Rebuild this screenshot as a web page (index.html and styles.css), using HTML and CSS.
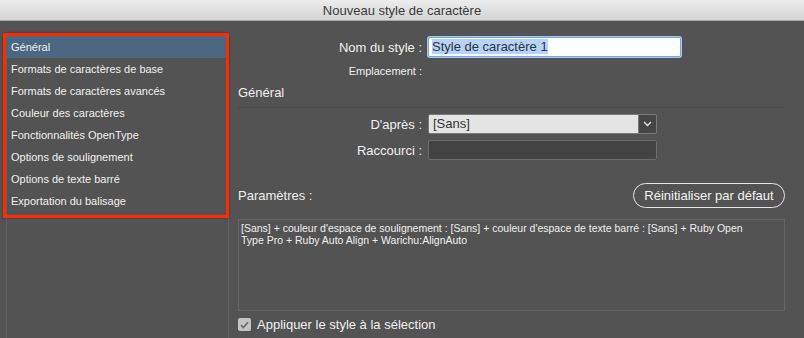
FILE: index.html
```html
<!DOCTYPE html>
<html lang="fr">
<head>
  <meta charset="UTF-8" />
  <title>Nouveau style de caractère</title>
  <link rel="stylesheet" href="styles.css">
</head>
<body>
  <div class="titlebar">Nouveau style de caractère</div>

  <div class="dialog">
    <div class="sidebar">
      <ul class="nav">
        <li class="active">Général</li>
        <li>Formats de caractères de base</li>
        <li>Formats de caractères avancés</li>
        <li>Couleur des caractères</li>
        <li>Fonctionnalités OpenType</li>
        <li>Options de soulignement</li>
        <li>Options de texte barré</li>
        <li>Exportation du balisage</li>
      </ul>
      <div class="highlight"></div>
    </div>

    <div class="main">
      <div class="row name-row">
        <label>Nom du style :</label>
        <div class="text-input focused"><span class="selected">Style de caractère 1</span></div>
      </div>
      <div class="row small-row">
        <label class="small">Emplacement :</label>
        <div></div>
      </div>

      <h3 class="group-title">Général</h3>

      <div class="row field-row">
        <label>D'après :</label>
        <div class="select">
          <span class="select-value">[Sans]</span>
          <span class="select-arrow">
            <svg width="9" height="6" viewBox="0 0 9 6"><path d="M1 1 L4.5 4.5 L8 1" fill="none" stroke="#e8e8e8" stroke-width="1.3"/></svg>
          </span>
        </div>
      </div>
      <div class="row field-row">
        <label>Raccourci :</label>
        <div class="text-input dark"></div>
      </div>

      <div class="params-head">
        <span>Paramètres :</span>
        <button class="pill">Réinitialiser par défaut</button>
      </div>

      <div class="params-box">
        <p>[Sans] + couleur d'espace de soulignement : [Sans] + couleur d'espace de texte barré : [Sans] + Ruby Open Type Pro + Ruby Auto Align + Warichu:AlignAuto</p>
      </div>

      <div class="check-row">
        <span class="checkbox">
          <svg width="9" height="8" viewBox="0 0 9 8"><path d="M1 4.2 L3.4 6.5 L8 1.2" fill="none" stroke="#6a6a6a" stroke-width="1.6"/></svg>
        </span>
        <span>Appliquer le style à la sélection</span>
      </div>
    </div>
  </div>
</body>
</html>
```

FILE: styles.css
```css
body {
  margin: 0;
  width: 804px;
  height: 338px;
  overflow: hidden;
  background: #535353;
  font-family: 'Liberation Sans', Arial, sans-serif;
  color: #f0f0f0;
}

.titlebar {
  height: 20px;
  line-height: 21px;
  text-align: center;
  font-size: 13px;
  color: #3a3a3a;
  background: linear-gradient(#ececec, #d4d4d4);
  border-bottom: 1px solid #a8a8a8;
}

.dialog {
  display: flex;
  height: 317px;
}

.sidebar {
  position: relative;
  width: 221px;
  margin: 14px 0 0 6px;
  border: 1px solid #616161;
  border-bottom: none;
}

.nav {
  list-style: none;
  margin: 0;
  padding: 0;
}

.nav li {
  height: 22px;
  line-height: 22px;
  padding-left: 4px;
  font-size: 11px;
  white-space: nowrap;
}

.nav li.active {
  background: #4b6782;
}

.highlight {
  position: absolute;
  left: -4px;
  top: -3px;
  width: 220px;
  height: 179px;
  border: 3px solid #ff2a00;
  box-shadow: 0 0 2px rgba(0, 0, 0, 0.4);
}

.main {
  width: 547px;
  margin-left: 9px;
  display: flex;
  flex-direction: column;
}

.row {
  display: grid;
  grid-template-columns: 184px 1fr;
  column-gap: 6px;
  align-items: center;
}

.row label {
  text-align: right;
  font-size: 13px;
}

.row label.small {
  font-size: 11px;
}

.name-row {
  margin-top: 16px;
  grid-template-columns: 184px 253px;
}

.small-row {
  margin-top: 7px;
  height: 14px;
}

.text-input {
  height: 18px;
  border: 1px solid #6e6e6e;
  border-radius: 2px;
  font-size: 13px;
  line-height: 18px;
  padding-left: 3px;
}

.text-input.focused {
  background: #ffffff;
  color: #333;
  border-color: #76a6e6;
  box-shadow: 0 0 0 1px #a9c8f0;
}

.text-input.dark {
  background: #434343;
}

.selected {
  background: #b4d4fb;
}

.group-title {
  margin: 7px 0 0;
  padding-bottom: 6px;
  height: 16px;
  line-height: 16px;
  font-size: 13px;
  font-weight: normal;
  border-bottom: 1px solid #4a4a4a;
}

.field-row {
  margin-top: 6px;
  grid-template-columns: 184px 229px;
}

.select {
  display: flex;
  height: 18px;
  border: 1px solid #7a7a7a;
  border-radius: 2px;
  overflow: hidden;
}

.select-value {
  flex: 1;
  background: #e4e4e4;
  color: #333;
  font-size: 13px;
  line-height: 18px;
  padding-left: 4px;
}

.select-arrow {
  width: 17px;
  background: #454545;
  border-left: 1px solid #7a7a7a;
  display: flex;
  align-items: center;
  justify-content: center;
}

.params-head {
  margin-top: 23px;
  display: flex;
  justify-content: space-between;
  align-items: center;
  font-size: 13px;
}

.pill {
  height: 25px;
  width: 152px;
  padding: 0;
  background: transparent;
  color: #f4f4f4;
  border: 1px solid #e6e6e6;
  border-radius: 13px;
  font-family: inherit;
  font-size: 13px;
}

.params-box {
  margin-top: 11px;
  height: 88px;
  border: 1px solid #666;
  padding: 2px 33px 0 2px;
}

.params-box p {
  margin: 0;
  font-size: 10.5px;
  line-height: 12px;
}

.check-row {
  margin-top: 6px;
  display: flex;
  align-items: center;
  gap: 6px;
  font-size: 13px;
}

.checkbox {
  width: 13px;
  height: 13px;
  border-radius: 2px;
  background: #c4c4c4;
  display: flex;
  align-items: center;
  justify-content: center;
}
```
